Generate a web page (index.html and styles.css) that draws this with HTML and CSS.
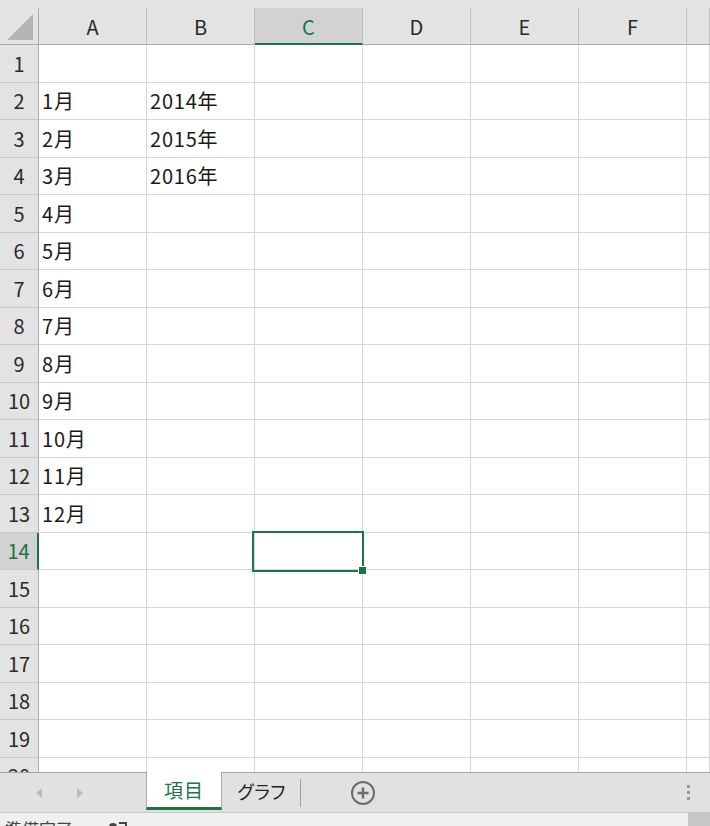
FILE: index.html
```html
<!DOCTYPE html>
<html lang="ja">
<head>
<meta charset="utf-8">
<title>Excel</title>
<link rel="stylesheet" href="styles.css">
</head>
<body>
<div class="app">
  <div class="topstrip"></div>
  <div class="colheads">
    <div class="corner"><svg width="39" height="36" viewBox="0 0 39 36"><polygon points="7,32 33,32 33,6" fill="#b4b4b4"/></svg></div>
    <div class="ch">A</div>
    <div class="ch">B</div>
    <div class="ch sel">C</div>
    <div class="ch">D</div>
    <div class="ch">E</div>
    <div class="ch">F</div>
    <div class="ch"></div>
  </div>
  <div class="grid">
    <div class="rh">1</div><div class="c"></div><div class="c"></div><div class="c"></div><div class="c"></div><div class="c"></div><div class="c"></div><div class="c"></div>
    <div class="rh">2</div><div class="c">1月</div><div class="c">2014年</div><div class="c"></div><div class="c"></div><div class="c"></div><div class="c"></div><div class="c"></div>
    <div class="rh">3</div><div class="c">2月</div><div class="c">2015年</div><div class="c"></div><div class="c"></div><div class="c"></div><div class="c"></div><div class="c"></div>
    <div class="rh">4</div><div class="c">3月</div><div class="c">2016年</div><div class="c"></div><div class="c"></div><div class="c"></div><div class="c"></div><div class="c"></div>
    <div class="rh">5</div><div class="c">4月</div><div class="c"></div><div class="c"></div><div class="c"></div><div class="c"></div><div class="c"></div><div class="c"></div>
    <div class="rh">6</div><div class="c">5月</div><div class="c"></div><div class="c"></div><div class="c"></div><div class="c"></div><div class="c"></div><div class="c"></div>
    <div class="rh">7</div><div class="c">6月</div><div class="c"></div><div class="c"></div><div class="c"></div><div class="c"></div><div class="c"></div><div class="c"></div>
    <div class="rh">8</div><div class="c">7月</div><div class="c"></div><div class="c"></div><div class="c"></div><div class="c"></div><div class="c"></div><div class="c"></div>
    <div class="rh">9</div><div class="c">8月</div><div class="c"></div><div class="c"></div><div class="c"></div><div class="c"></div><div class="c"></div><div class="c"></div>
    <div class="rh">10</div><div class="c">9月</div><div class="c"></div><div class="c"></div><div class="c"></div><div class="c"></div><div class="c"></div><div class="c"></div>
    <div class="rh">11</div><div class="c">10月</div><div class="c"></div><div class="c"></div><div class="c"></div><div class="c"></div><div class="c"></div><div class="c"></div>
    <div class="rh">12</div><div class="c">11月</div><div class="c"></div><div class="c"></div><div class="c"></div><div class="c"></div><div class="c"></div><div class="c"></div>
    <div class="rh">13</div><div class="c">12月</div><div class="c"></div><div class="c"></div><div class="c"></div><div class="c"></div><div class="c"></div><div class="c"></div>
    <div class="rh sel">14</div><div class="c"></div><div class="c"></div><div class="c active"><span class="selbox"><span class="handle"></span></span></div><div class="c"></div><div class="c"></div><div class="c"></div><div class="c"></div>
    <div class="rh">15</div><div class="c"></div><div class="c"></div><div class="c"></div><div class="c"></div><div class="c"></div><div class="c"></div><div class="c"></div>
    <div class="rh">16</div><div class="c"></div><div class="c"></div><div class="c"></div><div class="c"></div><div class="c"></div><div class="c"></div><div class="c"></div>
    <div class="rh">17</div><div class="c"></div><div class="c"></div><div class="c"></div><div class="c"></div><div class="c"></div><div class="c"></div><div class="c"></div>
    <div class="rh">18</div><div class="c"></div><div class="c"></div><div class="c"></div><div class="c"></div><div class="c"></div><div class="c"></div><div class="c"></div>
    <div class="rh">19</div><div class="c"></div><div class="c"></div><div class="c"></div><div class="c"></div><div class="c"></div><div class="c"></div><div class="c"></div>
    <div class="rh">20</div><div class="c"></div><div class="c"></div><div class="c"></div><div class="c"></div><div class="c"></div><div class="c"></div><div class="c"></div>
  </div>
  <div class="tabbar">
    <div class="nav">
      <span class="arrow left"></span>
      <span class="arrow right"></span>
    </div>
    <div class="tab active">項目</div>
    <div class="tab">グラフ</div>
    <div class="sep"></div>
    <div class="add">
      <svg width="26" height="26" viewBox="0 0 26 26"><circle cx="13" cy="13" r="11" fill="none" stroke="#6b6b6b" stroke-width="2"/><path d="M13 7.5v11M7.5 13h11" stroke="#6b6b6b" stroke-width="2.4"/></svg>
    </div>
    <div class="spacer"></div>
    <div class="dots"><i></i><i></i><i></i></div>
  </div>
  <div class="status">
    <span class="ready">準備完了</span>
    <span class="macro"><svg width="20" height="14" viewBox="0 0 20 14"><circle cx="5" cy="5" r="4" fill="#444"/><path d="M11 1h7v12h-2" fill="none" stroke="#444" stroke-width="2"/></svg></span>
    <span class="sspacer"></span>
    <span class="view"></span>
  </div>
</div>
</body>
</html>
```

FILE: styles.css
```css
html, body {
  margin: 0;
  padding: 0;
  overflow: hidden;
  background: #ffffff;
}

.app {
  width: 710px;
  height: 842px;
  display: flex;
  flex-direction: column;
  font-family: "Noto Sans CJK JP", "Noto Sans", sans-serif;
  color: #222;
}

.topstrip {
  height: 8px;
  background: #e3e3e3;
  flex: none;
}

.colheads {
  flex: none;
  height: 37px;
  display: grid;
  grid-template-columns: 39px repeat(6, 108px) 1fr;
  background: #e3e3e3;
}

.corner {
  border-right: 1px solid #ababab;
  border-bottom: 1px solid #ababab;
  box-sizing: border-box;
  height: 37px;
}

.corner svg {
  display: block;
}

.ch {
  box-sizing: border-box;
  height: 37px;
  border-right: 1px solid #c0c0c0;
  border-bottom: 1px solid #ababab;
  display: flex;
  align-items: center;
  justify-content: center;
  font-size: 20px;
  color: #2a2a2a;
}

.ch.sel {
  background: #d2d2d2;
  border-bottom: 2px solid #217346;
  color: #217346;
  padding-top: 1px;
}

.grid {
  flex: 1;
  overflow: hidden;
  display: grid;
  grid-template-columns: 39px repeat(6, 108px) 1fr;
  grid-auto-rows: 37.5px;
  align-content: start;
}

.rh {
  box-sizing: border-box;
  background: #e3e3e3;
  border-right: 1px solid #ababab;
  border-bottom: 1px solid #c8c8c8;
  display: flex;
  align-items: center;
  justify-content: center;
  font-size: 20px;
  color: #2a2a2a;
}

.rh.sel {
  background: #d2d2d2;
  border-right: 2px solid #217346;
  color: #217346;
}

.c {
  box-sizing: border-box;
  border-right: 1px solid #d6d6d6;
  border-bottom: 1px solid #d6d6d6;
  display: flex;
  align-items: center;
  padding-left: 3px;
  font-size: 20px;
  letter-spacing: 0.8px;
  color: #1a1a1a;
  white-space: nowrap;
}

.c.active {
  position: relative;
}

.selbox {
  position: absolute;
  left: -3px;
  top: -2px;
  width: 112px;
  height: 41px;
  box-sizing: border-box;
  border: 2px solid #217346;
}

.handle {
  position: absolute;
  right: -4px;
  bottom: -4px;
  width: 7px;
  height: 7px;
  background: #217346;
  box-shadow: 0 0 0 1px #ffffff;
}

.tabbar {
  flex: none;
  height: 40px;
  box-sizing: border-box;
  border-top: 1px solid #a6a6a6;
  background: #e1e1e1;
  display: flex;
  align-items: stretch;
}

.nav {
  width: 146px;
  display: flex;
  align-items: center;
  flex: none;
}

.arrow {
  width: 0;
  height: 0;
  border-top: 5px solid transparent;
  border-bottom: 5px solid transparent;
}

.arrow.left {
  margin-left: 36px;
  border-right: 6px solid #bcbcbc;
}

.arrow.right {
  margin-left: 35px;
  border-left: 6px solid #bcbcbc;
}

.tab {
  flex: none;
  width: 78px;
  display: flex;
  align-items: center;
  justify-content: center;
  font-size: 18px;
  letter-spacing: -2px;
  color: #222;
  padding-bottom: 3px;
}

.tab.active {
  width: 76px;
  box-sizing: border-box;
  margin-top: -1px;
  height: 38px;
  background: #ffffff;
  border-left: 1px solid #a6a6a6;
  border-right: 1px solid #a6a6a6;
  border-bottom: 3px solid #217346;
  color: #217346;
  font-size: 19px;
  font-weight: 400;
  letter-spacing: 1px;
  padding-bottom: 0;
}

.sep {
  flex: none;
  width: 1px;
  margin: 6px 0 5px;
  background: #a0a0a0;
}

.add {
  flex: none;
  width: 26px;
  margin-left: 49px;
  display: flex;
  align-items: center;
}

.add svg {
  display: block;
}

.spacer {
  flex: 1;
}

.dots {
  flex: none;
  width: 4px;
  display: flex;
  flex-direction: column;
  justify-content: center;
  gap: 3px;
  margin-right: 19px;
}

.dots i {
  display: block;
  width: 3px;
  height: 3px;
  background: #9a9a9a;
}

.status {
  flex: none;
  height: 30px;
  box-sizing: border-box;
  border-top: 1px solid #c8c8c8;
  background: #f0f0f0;
  display: flex;
  align-items: flex-start;
  font-size: 17px;
  color: #444;
}

.ready {
  padding: 7px 0 0 5px;
  line-height: 1;
}

.macro {
  margin-left: 35px;
  padding-top: 9px;
}

.macro svg {
  display: block;
}

.sspacer {
  flex: 1;
}

.view {
  width: 22px;
  height: 30px;
  background: #c6c6c6;
}
```
